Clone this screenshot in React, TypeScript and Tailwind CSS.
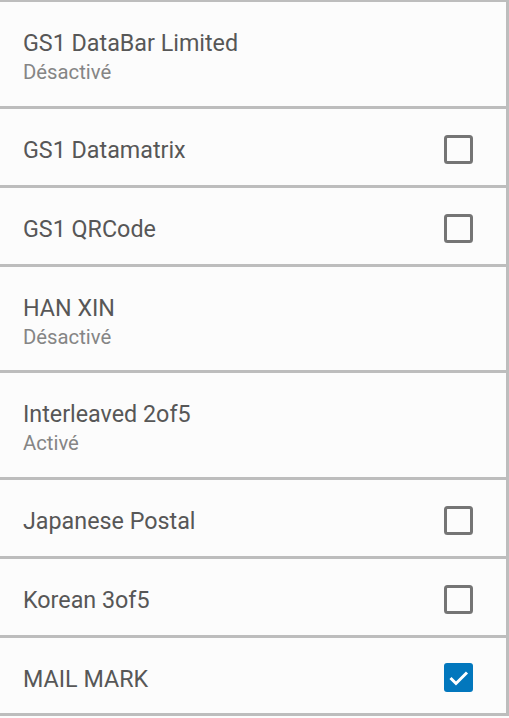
import React from "react";

type Row = { title: string; sub?: string; check?: "off" | "on"; h: number };

const rows: Row[] = [
  { title: "GS1 DataBar Limited", sub: "Désactivé", h: 104 },
  { title: "GS1 Datamatrix", check: "off", h: 76 },
  { title: "GS1 QRCode", check: "off", h: 76 },
  { title: "HAN XIN", sub: "Désactivé", h: 103 },
  { title: "Interleaved 2of5", sub: "Activé", h: 104 },
  { title: "Japanese Postal", check: "off", h: 76 },
  { title: "Korean 3of5", check: "off", h: 76 },
  { title: "MAIL MARK", check: "on", h: 75 },
];

function Box({ on }: { on: boolean }) {
  if (on) {
    return (
      <svg width="29" height="29" viewBox="0 0 29 29">
        <rect x="0" y="0" width="29" height="29" rx="3" fill="#0277bd" />
        <path d="M6.5 15 L12 20.5 L23 9.5" fill="none" stroke="#ffffff" strokeWidth="3" />
      </svg>
    );
  }
  return (
    <svg width="29" height="29" viewBox="0 0 29 29">
      <rect x="1.5" y="1.5" width="26" height="26" rx="2" fill="none" stroke="#757575" strokeWidth="3" />
    </svg>
  );
}

export default function App() {
  return (
    <div
      className="w-[509px] h-[718px] bg-[#fcfcfc] overflow-hidden"
      style={{ fontFamily: "Roboto, 'Noto Sans', sans-serif" }}
    >
      <div className="w-[509px] border-r-[3px] border-[#bdbdbd]">
        <div className="h-[2px] bg-[#bdbdbd]" />
        {rows.map((r, i) => (
          <div key={i}>
            <div
              className="flex items-center pl-[23px] pr-[33px] pt-[4px]"
              style={{ height: r.h }}
            >
              <div className="flex-1 flex flex-col pt-[2px]">
                <div className="text-[23.3px] leading-[28px] font-normal text-[#575757]">{r.title}</div>
                {r.sub && (
                  <div className="text-[20.3px] leading-[26px] font-normal text-[#858585] mt-[2px]">{r.sub}</div>
                )}
              </div>
              {r.check && <Box on={r.check === "on"} />}
            </div>
            <div className="h-[3px] bg-[#bdbdbd]" />
          </div>
        ))}
      </div>
    </div>
  );
}
